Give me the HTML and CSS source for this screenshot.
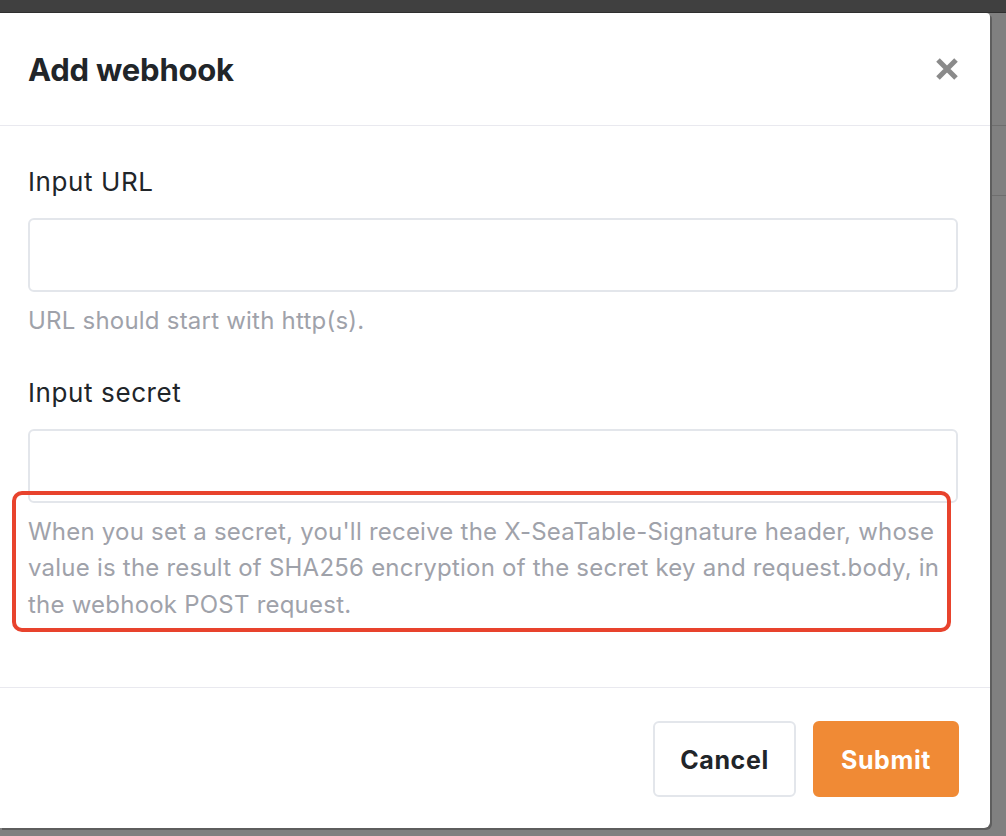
FILE: index.html
```html
<!DOCTYPE html>
<html lang="en">
<head>
<meta charset="utf-8">
<title>Add webhook</title>
<link rel="stylesheet" href="styles.css">
</head>
<body>
<div class="topbar"></div>
<div class="page">
  <div class="modal">
    <div class="modal-header">
      <h1 class="modal-title">Add webhook</h1>
      <button class="close" aria-label="Close">
        <svg width="24" height="22" viewBox="0 0 24 22"><path d="M3 2 L21 20 M21 2 L3 20" stroke="#8a8a8a" stroke-width="5" stroke-linecap="butt"/></svg>
      </button>
    </div>
    <div class="modal-body">
      <div class="form-group">
        <label class="label">Input URL</label>
        <input class="input" type="text">
        <p class="help">URL should start with http(s).</p>
      </div>
      <div class="form-group">
        <label class="label">Input secret</label>
        <input class="input" type="text">
        <p class="help">When you set a secret, you'll receive the X-SeaTable-Signature header, whose value is the result of SHA256 encryption of the secret key and request.body, in the webhook POST request.</p>
      </div>
      <div class="highlight"></div>
    </div>
    <div class="modal-footer">
      <button class="btn btn-cancel">Cancel</button>
      <button class="btn btn-submit">Submit</button>
    </div>
  </div>
  <div class="side">
    <div class="side-a"></div>
    <div class="side-b"></div>
    <div class="side-c"></div>
  </div>
</div>
</body>
</html>
```
FILE: styles.css
```css
* { box-sizing: border-box; }
html, body { margin: 0; padding: 0; }
body {
  background: #808080;
  font-family: Inter, "Noto Sans", sans-serif;
  width: 1006px;
  height: 836px;
  overflow: hidden;
}
.topbar {
  height: 13px;
  background: #404040;
  border-bottom: 1px solid #2f2f2f;
}
.page {
  display: flex;
  height: 815px;
}
.modal {
  width: 990px;
  height: 815px;
  background: #fff;
  border-radius: 0 4px 6px 0;
  box-shadow: 2px 2px 0 #5e5e5e;
  display: flex;
  flex-direction: column;
  position: relative;
}
.side {
  flex: 1;
  margin-left: 2px;
  display: flex;
  flex-direction: column;
}
.side-a { height: 113px; border-bottom: 1px solid #6e6e6e; }
.side-b { height: 70px; border-bottom: 1px solid #6e6e6e; }
.side-c { flex: 1; }
.modal-header {
  height: 113px;
  flex: none;
  padding: 0 31px 0 28px;
  display: flex;
  align-items: center;
  justify-content: space-between;
  border-bottom: 1px solid #e9e9ef;
}
.modal-title {
  margin: 0;
  font-size: 31px;
  font-weight: 700;
  color: #212529;
  letter-spacing: -0.2px;
}
.close {
  border: 0;
  background: none;
  padding: 0;
  width: 24px;
  height: 22px;
  display: flex;
}
.modal-body {
  flex: 1;
  padding: 36px 32px 0 28px;
}
.form-group { margin-bottom: 33px; }
.label {
  display: block;
  font-size: 26px;
  letter-spacing: 0.6px;
  line-height: 39px;
  color: #212529;
  margin-bottom: 17px;
}
.input {
  display: block;
  width: 930px;
  height: 74px;
  border: 2px solid #e3e6eb;
  border-radius: 6px;
  background: #fff;
  margin: 0;
}
.help {
  margin: 11px 0 0;
  font-size: 24px;
  letter-spacing: 0.22px;
  line-height: 36.5px;
  color: #9fa2aa;
}
.highlight {
  position: absolute;
  left: 12px;
  top: 478px;
  width: 939px;
  height: 141px;
  border: 4px solid #e8432d;
  border-radius: 10px;
  pointer-events: none;
}
.modal-footer {
  height: 141px;
  flex: none;
  border-top: 1px solid #e9e9ef;
  display: flex;
  align-items: center;
  justify-content: flex-end;
  gap: 17px;
  padding-right: 31px;
  padding-top: 2px;
}
.btn {
  font-family: Inter, "Noto Sans", sans-serif;
  font-size: 25px;
  font-weight: 700;
  height: 76px;
  border-radius: 6px;
  padding: 2px 0 0;
  letter-spacing: 0.6px;
}
.btn-cancel {
  width: 143px;
  background: #fff;
  border: 2px solid #e3e6eb;
  color: #212529;
}
.btn-submit {
  width: 146px;
  background: #f08a35;
  border: 2px solid #f08a35;
  color: #fff;
}
```
